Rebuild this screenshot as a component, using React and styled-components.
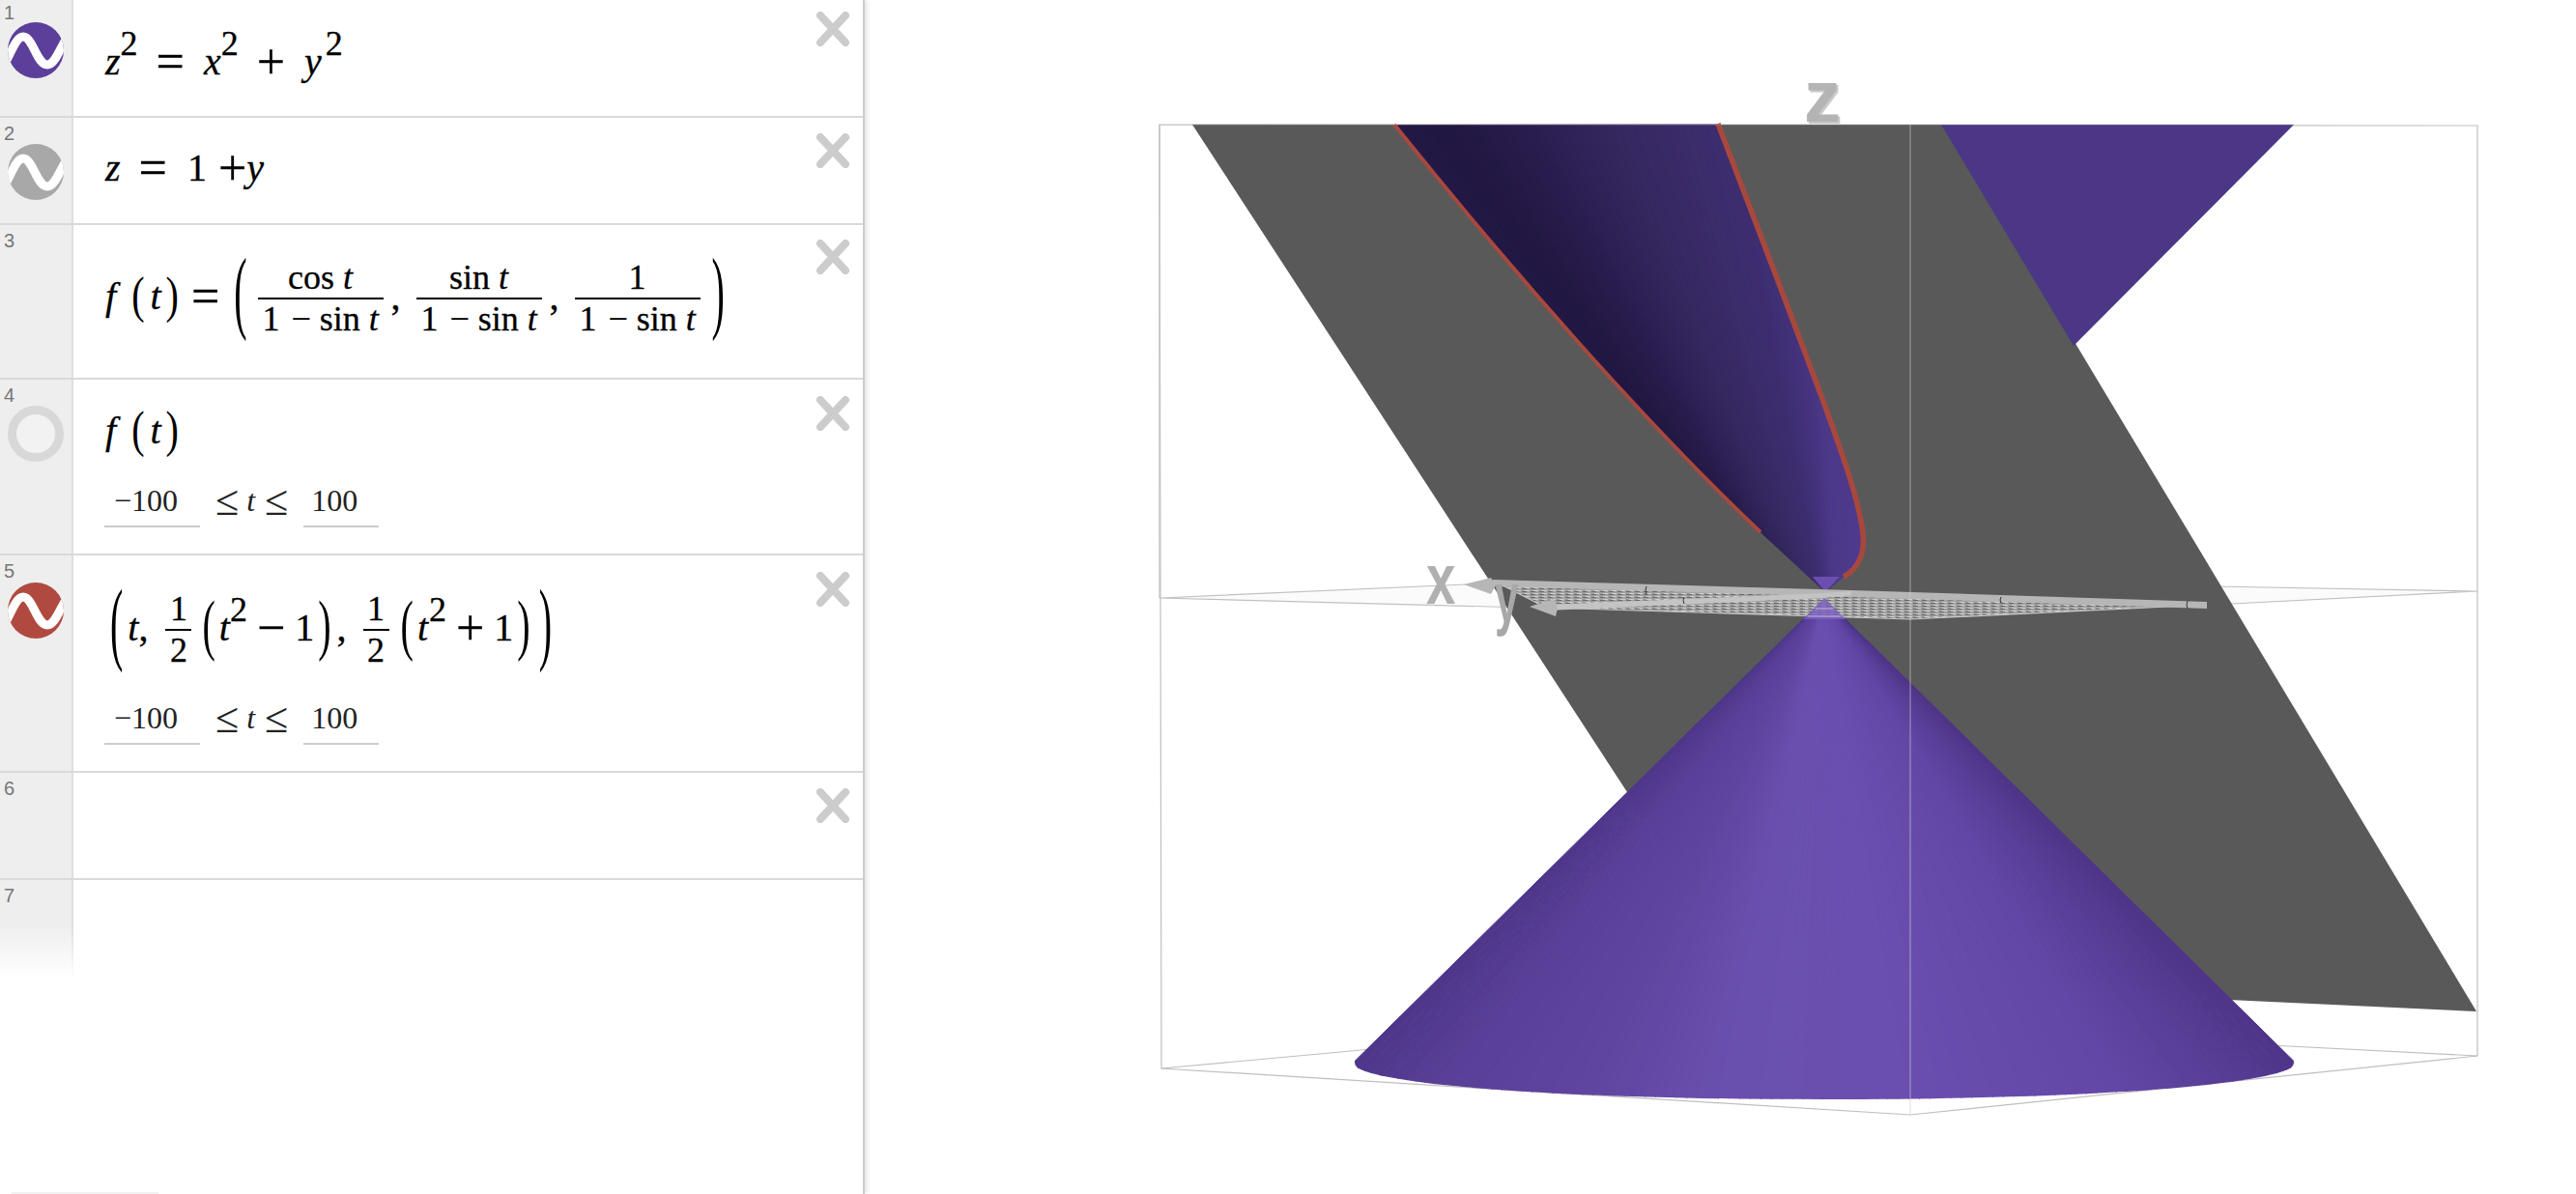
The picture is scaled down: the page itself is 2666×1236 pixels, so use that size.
import React from "react"
import styled, { createGlobalStyle } from "styled-components"

const GlobalStyle = createGlobalStyle`
    html, body {
        margin: 0;
        height: 100%;
        background: #fff;
        overflow: hidden;
    }
`

const Page = styled.div`
    display: flex;
    width: 2666px;
    height: 1236px;
    overflow: hidden;
    background: #fff;
`
const Sidebar = styled.div`
    position: relative;
    flex: 0 0 895px;
    height: 1236px;
    box-sizing: border-box;
    border-right: 2px solid #ccc;
    box-shadow: 2px 0 5px rgba(0, 0, 0, 0.12);
    overflow: hidden;
    z-index: 1;
`
const List = styled.div`
    margin-top: -3px;
`
const Row = styled.div`
    display: grid;
    grid-template-columns: 76px 1fr;
    height: ${(p) => p.$h}px;
    box-sizing: border-box;
    border-bottom: ${(p) => (p.$last ? "none" : "2px solid #d9d9d9")};
`
const Gutter = styled.div`
    box-sizing: border-box;
    padding: 6px 0 0 4px;
    border-right: 2px solid #ddd;
    background: #eee;
    ${(p) =>
        p.$fade &&
        `
        height: 102px;
        background: linear-gradient(#eee 45%, #fff);
        border-image: linear-gradient(#ddd 45%, #fff) 1;
    `}
`
const Num = styled.div`
    font: 20px/20px "Liberation Sans", sans-serif;
    color: #777;
    height: 20px;
`
const WaveIcon = styled.svg`
    display: block;
    width: 58px;
    height: 58px;
    margin: ${(p) => p.$top}px 0 0 4px;
`
const RingIcon = styled.div`
    width: 58px;
    height: 58px;
    box-sizing: border-box;
    margin: ${(p) => p.$top}px 0 0 4px;
    border: 9px solid #d8d8d8;
    border-radius: 50%;
    background: #f2f2f2;
`
const Main = styled.div`
    display: flex;
    justify-content: space-between;
    align-items: flex-start;
    padding-right: 13px;
`
const Close = styled.svg`
    flex: none;
    width: 36px;
    height: 36px;
    margin-top: ${(p) => p.$top}px;
`
const Body = styled.div`
    padding: ${(p) => p.$top}px 0 0 ${(p) => p.$left ?? 32}px;
`
const MathLine = styled.div`
    font: 40px/40px "Liberation Serif", serif;
    color: #000;
    white-space: pre;
    -webkit-text-stroke: 0.3px #000;
`
const V = styled.i`
    font-style: italic;
`
const Sup = styled.span`
    font-style: normal;
    font-size: 36px;
    line-height: 0;
    vertical-align: 20px;
    margin-left: ${(p) => p.$gap ?? 0}px;
`
const Op = styled.span`
    font-size: 52px;
    line-height: 0;
    vertical-align: -4px;
    margin: 0 ${(p) => p.$right ?? 0}px 0 ${(p) => p.$left ?? 0}px;
`
const Gap = styled.span`
    margin-left: ${(p) => p.$w}px;
`
const Paren = styled.span`
    display: inline-block;
    line-height: 40px;
    transform: scaleY(${(p) => p.$sy});
    transform-origin: 50% 59%;
    margin: 0 ${(p) => p.$right ?? 0}px 0 ${(p) => p.$left ?? 0}px;
    -webkit-text-stroke: 0;
`
const Frac = styled.span`
    display: inline-flex;
    flex-direction: column;
    width: ${(p) => p.$w}px;
    vertical-align: 21px;
    text-align: center;
    font-size: 36px;
    line-height: 30px;
    margin: 0 ${(p) => p.$right ?? 0}px 0 ${(p) => p.$left ?? 0}px;
`
const Numer = styled.span`
    display: block;
    height: 36px;
`
const Denom = styled.span`
    display: block;
    height: 38px;
    padding-top: 2px;
    line-height: 36px;
    border-top: 2px solid #000;
`
const Minus = styled.span`
    margin: 0 ${(p) => p.$right ?? 0}px 0 ${(p) => p.$left ?? 0}px;
`
const Bounds = styled.div`
    display: flex;
    align-items: baseline;
    margin-top: ${(p) => p.$top}px;
    font: 32px/36px "Liberation Serif", serif;
    color: #222;
`
const BoundField = styled.span`
    box-sizing: border-box;
    width: ${(p) => p.$w}px;
    height: 46px;
    padding-left: ${(p) => p.$pad}px;
    border-bottom: 2px solid #ccc;
`
const Le = styled.span`
    font-size: 44px;
    transform: translateY(4px);
    margin: 0 ${(p) => p.$right}px 0 ${(p) => p.$left}px;
`
const Residue = styled.div`
    position: absolute;
    left: 12px;
    bottom: 0;
    width: 152px;
    height: 2px;
    background: #f2f2f2;
`
const GraphPane = styled.div`
    flex: 1;
    height: 1236px;
`
const GraphSvg = styled.svg`
    display: block;
    width: 1771px;
    height: 1236px;
`
const AxisLabel = styled.text`
    font-family: "Liberation Sans", sans-serif;
    font-weight: 700;
`

const hex = (c) => [1, 3, 5].map((i) => parseInt(c.slice(i, i + 2), 16))

// piecewise colour from [pos, "#rrggbb"] stops
const colorAt = (stops, t) => {
    let i = 0
    while (i < stops.length - 2 && t > stops[i + 1][0]) i++
    const [p0, c0] = stops[i]
    const [p1, c1] = stops[i + 1]
    const k = Math.min(1, Math.max(0, (t - p0) / (p1 - p0)))
    const a = hex(c0)
    const b = hex(c1)
    return `rgb(${a.map((v, j) => Math.round(v + (b[j] - v) * k)).join(",")})`
}

// cone shading runs along rays from the apex
const Fan = ({ apex, y, x0, x1, stops, n = 96 }) => (
    <>
        {Array.from({ length: n }, (_, i) => {
            const a = x0 + ((x1 - x0) * i) / n
            const b = x0 + ((x1 - x0) * (i + 1)) / n
            const c = colorAt(stops, (a + b) / 2)
            return (
                <polygon
                    key={i}
                    points={`${apex[0]},${apex[1]} ${a},${y} ${b},${y}`}
                    fill={c}
                    stroke={c}
                    strokeWidth="1"
                />
            )
        })}
    </>
)

const upperStops = [
    [1300, "#291d50"],
    [1495, "#211742"],
    [1570, "#281c4c"],
    [1650, "#33265c"],
    [1730, "#3a2b68"],
    [1800, "#3e2e72"],
    [1880, "#4d398a"],
    [2100, "#523b92"],
]
const lowerStops = [
    [1360, "#4d368a"],
    [1480, "#593f98"],
    [1640, "#5f459f"],
    [1780, "#6a50ae"],
    [1960, "#6a4fb0"],
    [2200, "#6247a6"],
    [2416, "#4e3588"],
]

const LEFT_CURVE = "M1443 129 C1560 275 1700 435 1822 551"
const RIGHT_CURVE = "M1778 128 C1800 185 1855 330 1885 410 C1905 465 1925 520 1928 553 C1930 570 1925 588 1908 597"
const UPPER_CONE = `${LEFT_CURVE} L1889 613 L1908 597 C1925 588 1930 570 1928 553 C1925 520 1905 465 1885 410 C1855 330 1800 185 1778 128 Z`

const Graph = () => (
    <GraphPane>
        <GraphSvg viewBox="895 0 1771 1236">
            <defs>
                <clipPath id="upper-cone">
                    <path d={UPPER_CONE} />
                </clipPath>
                <clipPath id="lower-cone">
                    <path d="M1888 619 L2373 1095 Q2376 1102 2370 1106 C2330 1126 2130 1138 1888 1138 C1650 1138 1445 1126 1406 1106 Q1400 1102 1403 1095 Z" />
                </clipPath>
                <pattern id="mesh" width="9" height="3" patternUnits="userSpaceOnUse">
                    <rect width="9" height="3" fill="#a0a0a0" />
                    <rect width="5" height="1" fill="#6a6a6a" />
                    <rect x="3" y="2" width="5" height="1" fill="#cfcfcf" />
                </pattern>
            </defs>

            <g stroke="#bfbfbf" strokeWidth="1.2" fill="none">
                <path d="M1200 129 L2564 130 L2564 1093 L1977 1154 L1202 1106 Z" />
                <path d="M1200 129 L1200 619" />
                <path d="M1202 1106 L1420 1086 M2564 1093 L2350 1082" />
            </g>

            <polygon points="1200,619 1517,605 1581,628" fill="#fbfbfb" />
            <polygon points="2300,607 2564,612 2300,626" fill="#fbfbfb" />
            <path d="M1200 619 L1517 605 M1200 619 L1581 629 M2564 612 L2290 607 M2564 612 L2290 626" stroke="#c0c0c0" strokeWidth="1.2" fill="none" />

            <polygon points="1234,129 2012,129 2563,1047 2307,1035 1780,960 1684,820" fill="#595959" />
            <polygon points="2009,129 2374,129 2146,358" fill="#4c3686" />

            <g clipPath="url(#upper-cone)">
                <Fan apex={[1903, 706]} y={129} x0={1300} x1={2100} stops={upperStops} />
            </g>
            <path d={LEFT_CURVE} fill="none" stroke="#a8483d" strokeWidth="4" />
            <path d={RIGHT_CURVE} fill="none" stroke="#a8483d" strokeWidth="5.5" />
            <polygon points="1876,597 1904,597 1889,613" fill="#6a4fae" />

            <g clipPath="url(#lower-cone)">
                <Fan apex={[1888, 619]} y={1140} x0={1360} x1={2416} stops={lowerStops} />
            </g>

            <polygon points="1555,606 2284,626 1977,641 1600,629" fill="url(#mesh)" stroke="#c8c8c8" strokeWidth="1.2" />
            <polygon points="1888,619 1910,641 1866,641" fill="#7a60bd" opacity="0.85" />
            <path d="M1879 630 H1897 M1871 638 H1905" stroke="#d8d8e8" strokeWidth="1.2" opacity="0.7" />

            <g fill="#b6b6b6">
                <polygon points="1545,600 1916,611 2284,623 2284,630 1916,618 1545,607" />
                <polygon points="1600,626 1888,614 1916,612 1916,616 1888,619 1600,632" fill="#c4c4c4" />
                <polygon points="1515,605 1543,598 1548,606 1543,615" />
                <polygon points="1583,628 1608,620 1612,630 1610,638" />
            </g>
            <path d="M1704 607 Q1702 611 1704 615 M1743 618 Q1741 621 1743 625 M2071 618 Q2069 621 2071 624 M2264 622 Q2262 626 2264 630" stroke="#333" strokeWidth="1" fill="none" />

            <AxisLabel x="1869" y="128" fontSize="76" fill="#c9c9c9">z</AxisLabel>
            <AxisLabel x="1867" y="126" fontSize="76" fill="#b4b4b4">z</AxisLabel>
            <AxisLabel transform="translate(1476 625) scale(0.74 1)" fontSize="74" fill="#b0b0b0">x</AxisLabel>
            <AxisLabel transform="translate(1547 644) scale(0.6 1)" fontSize="74" fill="#a8a8a8">y</AxisLabel>

            <path d="M1977 129 V1154" stroke="#d0d0d0" strokeOpacity="0.65" strokeWidth="1" />
            <path d="M1234 129 H2374" stroke="#aaa" strokeOpacity="0.55" strokeWidth="1.2" />
        </GraphSvg>
    </GraphPane>
)

const Wave = ({ color, top }) => (
    <WaveIcon viewBox="0 0 58 58" $top={top}>
        <circle cx="29" cy="29" r="29" fill={color} />
        <clipPath id={`wave-${color.slice(1)}`}>
            <circle cx="29" cy="29" r="29" />
        </clipPath>
        <path
            clipPath={`url(#wave-${color.slice(1)})`}
            d="M-2 41 C4 30 9 15 16 15 C26 15 30 44 41 44 C48 44 52 32 60 18"
            fill="none"
            stroke="#fff"
            strokeWidth="9"
        />
    </WaveIcon>
)

const CloseIcon = ({ top }) => (
    <Close viewBox="0 0 36 36" $top={top}>
        <path d="M5 4 L31 32 M31 4 L5 32" stroke="#ccc" strokeWidth="8" strokeLinecap="round" />
    </Close>
)

const SinFrac = ({ top, left, right }) => (
    <Frac $w={130} $left={left} $right={right}>
        <Numer>{top}</Numer>
        <Denom>
            1<Minus $left={12} $right={9}>−</Minus>sin <V>t</V>
        </Denom>
    </Frac>
)

const Half = ({ left, right }) => (
    <Frac $w={27} $left={left} $right={right}>
        <Numer>1</Numer>
        <Denom>2</Denom>
    </Frac>
)

const TRange = ({ top }) => (
    <Bounds $top={top}>
        <BoundField $w={99} $pad={10}>−100</BoundField>
        <Le $left={16} $right={8}>≤</Le>
        <V>t</V>
        <Le $left={10} $right={16}>≤</Le>
        <BoundField $w={78} $pad={8}>100</BoundField>
    </Bounds>
)

const Ft = () => (
    <>
        <V>f</V>
        <Paren $sy={1.32} $left={16}>(</Paren>
        <Gap $w={6} />
        <V>t</V>
        <Paren $sy={1.32} $left={5}>)</Paren>
    </>
)

const App = () => (
    <Page>
        <GlobalStyle />
        <Sidebar>
            <List>
                <Row $h={125}>
                    <Gutter>
                        <Num>1</Num>
                        <Wave color="#5b3f9b" top={0} />
                    </Gutter>
                    <Main>
                        <Body $top={47} $left={33}>
                            <MathLine>
                                <V>z</V><Sup>2</Sup>
                                <Op $left={19}>=</Op>
                                <Gap $w={20} /><V>x</V><Sup>2</Sup>
                                <Op $left={19}>+</Op>
                                <Gap $w={20} /><V>y</V><Sup $gap={4}>2</Sup>
                            </MathLine>
                        </Body>
                        <CloseIcon top={15} />
                    </Main>
                </Row>
                <Row $h={111}>
                    <Gutter>
                        <Num>2</Num>
                        <Wave color="#a8a8a8" top={1} />
                    </Gutter>
                    <Main>
                        <Body $top={32} $left={33}>
                            <MathLine>
                                <V>z</V>
                                <Op $left={19}>=</Op>
                                <Gap $w={21} />1
                                <Op $left={12}>+</Op>
                                <V>y</V>
                            </MathLine>
                        </Body>
                        <CloseIcon top={16} />
                    </Main>
                </Row>
                <Row $h={160}>
                    <Gutter>
                        <Num>3</Num>
                    </Gutter>
                    <Main>
                        <Body $top={39} $left={33}>
                            <MathLine>
                                <Ft />
                                <Op $left={13}>=</Op>
                                <Paren $sy={2.4} $left={15}>(</Paren>
                                <SinFrac top={<>cos <V>t</V></>} left={11} right={8} />,
                                <SinFrac top={<>sin <V>t</V></>} left={16} right={8} />,
                                <SinFrac top="1" left={16} right={8} />
                                <Paren $sy={2.4} $left={4}>)</Paren>
                            </MathLine>
                        </Body>
                        <CloseIcon top={15} />
                    </Main>
                </Row>
                <Row $h={182}>
                    <Gutter>
                        <Num>4</Num>
                        <RingIcon $top={1} />
                    </Gutter>
                    <Main>
                        <Body $top={33} $left={32}>
                            <MathLine>
                                <Gap $w={1} />
                                <Ft />
                            </MathLine>
                            <TRange top={31} />
                        </Body>
                        <CloseIcon top={17} />
                    </Main>
                </Row>
                <Row $h={225}>
                    <Gutter>
                        <Num>5</Num>
                        <Wave color="#b04a40" top={2} />
                    </Gutter>
                    <Main>
                        <Body $top={40} $left={32}>
                            <MathLine>
                                <Paren $sy={2.4} $left={6}>(</Paren>
                                <Gap $w={5} /><V>t</V>,
                                <Half left={18} />
                                <Paren $sy={1.74} $left={11}>(</Paren>
                                <Gap $w={4} /><V>t</V><Sup $gap={0}>2</Sup>
                                <Op $left={10}>−</Op>
                                <Gap $w={10} />1
                                <Paren $sy={1.74} $left={4}>)</Paren>
                                <Gap $w={6} />,
                                <Half left={17} />
                                <Paren $sy={1.74} $left={12}>(</Paren>
                                <Gap $w={4} /><V>t</V><Sup $gap={1}>2</Sup>
                                <Op $left={10}>+</Op>
                                <Gap $w={10} />1
                                <Paren $sy={1.74} $left={4}>)</Paren>
                                <Paren $sy={2.4} $left={9}>)</Paren>
                            </MathLine>
                            <TRange top={29} />
                        </Body>
                        <CloseIcon top={17} />
                    </Main>
                </Row>
                <Row $h={111}>
                    <Gutter>
                        <Num>6</Num>
                    </Gutter>
                    <Main>
                        <Body $top={0} />
                        <CloseIcon top={16} />
                    </Main>
                </Row>
                <Row $h={102} $last>
                    <Gutter $fade>
                        <Num>7</Num>
                    </Gutter>
                    <Main />
                </Row>
            </List>
            <Residue />
        </Sidebar>
        <Graph />
    </Page>
)

export default App
